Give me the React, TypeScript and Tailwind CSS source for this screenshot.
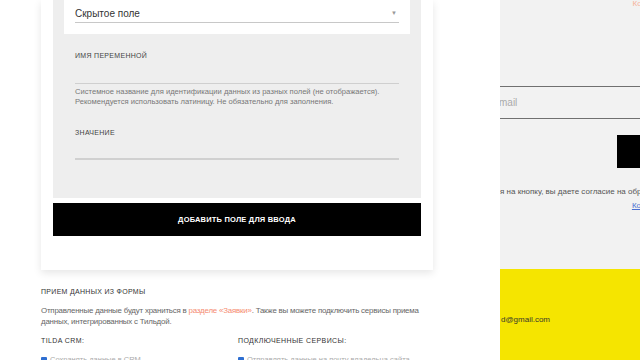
export default function App() {
  return (
    <div className="w-[640px] h-[360px] overflow-hidden flex bg-white font-['Liberation_Sans',Arial,sans-serif]">
      {/* left: field settings panel */}
      <div className="w-[500px] shrink-0 pl-[41px] flex flex-col">
        <div className="w-[392px] bg-white px-3 pb-[34px] shadow-[0_3px_8px_rgba(0,0,0,0.10)]">
          <div className="bg-[#eeeeee] px-[11px] pb-[38px]">
            <div className="bg-white px-[11px] h-[34px] pt-[4px]">
              <div className="flex items-center justify-between border-b border-[#c8c8c8] h-[19px]">
                <span className="text-[10px] text-[#333]">Скрытое поле</span>
                <span className="text-[6px] text-[#999] mr-[2px]">▼</span>
              </div>
            </div>
            <div className="px-[11px] pt-[17px]">
              <div className="text-[7px] text-[#444] tracking-[0.3px] leading-[10px]">ИМЯ ПЕРЕМЕННОЙ</div>
              <div className="h-[23px] border-b border-[#cfcfcf]" />
              <p className="mt-[3px] text-[7.6px] leading-[10px] text-[#777]">
                Системное название для идентификации данных из разных полей (не отображается).
                <br />
                Рекомендуется использовать латиницу. Не обязательно для заполнения.
              </p>
              <div className="mt-[21px] text-[7px] text-[#444] tracking-[0.3px] leading-[10px]">ЗНАЧЕНИЕ</div>
              <div className="h-[22px] border-b-2 border-[#d0d0d0]" />
            </div>
          </div>
          <button className="mt-[5px] w-full h-[33px] bg-black text-white text-[7.5px] font-bold tracking-[0.2px]">
            ДОБАВИТЬ ПОЛЕ ДЛЯ ВВОДА
          </button>
        </div>

        <div className="w-[392px] pt-[17px]">
          <div className="text-[7px] text-[#333] tracking-[0.3px] leading-[10px]">ПРИЕМ ДАННЫХ ИЗ ФОРМЫ</div>
          <p className="mt-[8px] text-[7.9px] tracking-[-0.2px] leading-[11px] text-[#666]">
            Отправленные данные будут храниться в <span className="text-[#f58b6f]">разделе «Заявки»</span>. Также вы
            можете подключить сервисы приема данных, интегрированных с Тильдой.
          </p>
          <div className="mt-[9px] grid grid-cols-[197px_1fr] text-[7px] text-[#333] tracking-[0.4px] leading-[10px]">
            <div>TILDA CRM:</div>
            <div>ПОДКЛЮЧЕННЫЕ СЕРВИСЫ:</div>
          </div>
          <div className="mt-[9px] grid grid-cols-[197px_1fr] text-[7.5px] text-[#aaa] leading-[10px]">
            <div className="flex items-center gap-[3px]">
              <span className="w-[6px] h-[6px] bg-[#2f6fd1] rounded-[1px]" />
              <span>Сохранять данные в CRM</span>
            </div>
            <div className="flex items-center gap-[3px]">
              <span className="w-[6px] h-[6px] bg-[#2f6fd1] rounded-[1px]" />
              <span>Отправлять данные на почту владельца сайта</span>
            </div>
          </div>
        </div>
      </div>

      {/* right: preview */}
      <div className="w-[140px] shrink-0 flex flex-col overflow-hidden">
        <div className="h-[269px] bg-[#f2f2f2] flex flex-col">
          <div className="h-[12px] flex justify-end">
            <span className="text-[8px] text-[#f6b39c] leading-[8px] whitespace-nowrap -mr-[6px]">Кон</span>
          </div>
          <div className="h-[74px]" />
          <div className="h-[33px] border-t border-b border-[#707070] flex items-center">
            <span className="text-[10px] text-[#aaa] -ml-[1px]">mail</span>
          </div>
          <div className="h-[16px]" />
          <div className="flex justify-end">
            <div className="w-[23px] h-[33px] bg-black" />
          </div>
          <div className="mt-[19px] text-[8px] text-[#555] whitespace-nowrap leading-[10px]">
            я на кнопку, вы даете согласие на обработку
          </div>
          <div className="mt-[4px] flex justify-end">
            <span className="text-[8px] text-[#4a6fd1] underline leading-[10px] whitespace-nowrap -mr-[12px]">Конф</span>
          </div>
        </div>
        <div className="flex-1 bg-[#f5e500] pt-[46px]">
          <div className="text-[8px] text-[#3a3a2a] leading-[10px] whitespace-nowrap pl-[1px]">d@gmail.com</div>
        </div>
      </div>
    </div>
  )
}
